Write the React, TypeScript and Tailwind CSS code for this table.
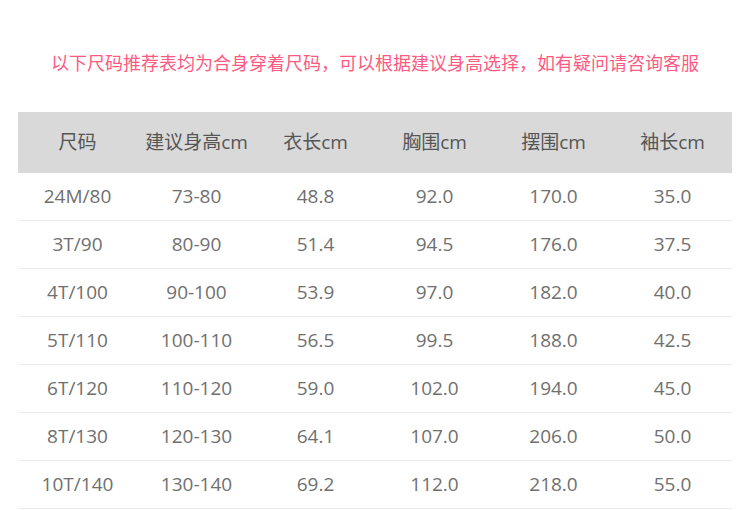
const headers = ["尺码", "建议身高cm", "衣长cm", "胸围cm", "摆围cm", "袖长cm"];

const rows = [
  ["24M/80", "73-80", "48.8", "92.0", "170.0", "35.0"],
  ["3T/90", "80-90", "51.4", "94.5", "176.0", "37.5"],
  ["4T/100", "90-100", "53.9", "97.0", "182.0", "40.0"],
  ["5T/110", "100-110", "56.5", "99.5", "188.0", "42.5"],
  ["6T/120", "110-120", "59.0", "102.0", "194.0", "45.0"],
  ["8T/130", "120-130", "64.1", "107.0", "206.0", "50.0"],
  ["10T/140", "130-140", "69.2", "112.0", "218.0", "55.0"],
];

export default function App() {
  return (
    <div
      className="w-[750px] h-[510px] bg-white overflow-hidden"
      style={{ fontFamily: '"Open Sans", "Noto Sans CJK SC", sans-serif' }}
    >
      <div className="pt-[48px] h-[112px] text-center text-[18px] leading-[30px] text-[#ff5a80]">
        以下尺码推荐表均为合身穿着尺码，可以根据建议身高选择，如有疑问请咨询客服
      </div>
      <div className="mx-[18px] w-[714px]">
        <div className="grid grid-cols-6 h-[61px] bg-[#d9d9d9] items-center text-center text-[19px] text-[#555]">
          {headers.map((h) => (
            <div key={h}>{h}</div>
          ))}
        </div>
        {rows.map((r) => (
          <div
            key={r[0]}
            className="grid grid-cols-6 h-[48px] border-b border-[#ececec] items-center text-center text-[19px] text-[#707070]"
          >
            {r.map((c, i) => (
              <div key={i}>{c}</div>
            ))}
          </div>
        ))}
      </div>
    </div>
  );
}
